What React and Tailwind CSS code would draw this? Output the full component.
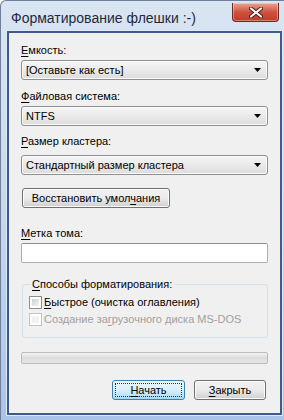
import React from 'react';

const U = ({ children }) => <span className="underline underline-offset-[2px]">{children}</span>;

const Select = ({ value }) => (
  <div className="mt-[2px] h-[20px] flex items-center justify-between rounded-[3px] border border-[#8e8f8f] bg-gradient-to-b from-[#f6f6f6] via-[#eaeaea] to-[#dcdcdc] pl-[4px] pr-[6px] shadow-[inset_0_0_0_1px_#fbfbfb]">
    <span className="leading-[15px] whitespace-nowrap">{value}</span>
    <svg width="7" height="4" viewBox="0 0 7 4">
      <path d="M0 0 H7 L3.5 4 Z" fill="#000" />
    </svg>
  </div>
);

const Checkbox = ({ disabled }) => (
  <span
    className={
      'shrink-0 w-[13px] h-[13px] p-[2px] border bg-white flex ' +
      (disabled ? 'border-[#c4c4c4]' : 'border-[#8e8f8f]')
    }
  >
    <span
      className={
        'flex-1 ' +
        (disabled
          ? 'bg-[#f2f2f2]'
          : 'bg-gradient-to-br from-[#cbcfd5] to-[#f6f6f6]')
      }
    />
  </span>
);

export default function App() {
  return (
    <div
      className="w-[284px] h-[420px] flex flex-col bg-gradient-to-b from-[#dae5f3] via-[#c7d8ee] to-[#a9c4e8] border-t border-l border-[#6d7f99] rounded-tl-[6px] text-[11px] text-black"
      style={{ fontFamily: '"Liberation Sans", Arial, sans-serif' }}
    >
      {/* Title bar */}
      <div className="h-[30px] flex items-start justify-between">
        <span className="mt-[7px] ml-[10px] text-[14px] leading-[20px] text-[#1e2a3a] whitespace-nowrap">
          Форматирование флешки :-)
        </span>
        <div className="mt-[2px] mr-[5px] w-[47px] h-[19px] rounded-b-[4px] border border-t-0 border-[#6b2a22] bg-gradient-to-b from-[#e8a496] via-[#d0513f] to-[#c23b2a] shadow-[inset_0_0_0_1px_rgba(255,255,255,0.35)] flex items-center justify-center">
          <svg width="14" height="11" viewBox="0 0 14 11">
            <path d="M2 1.5 L12 9.5 M12 1.5 L2 9.5" stroke="#4a1a14" strokeWidth="4" strokeLinecap="round" />
            <path d="M2 1.5 L12 9.5 M12 1.5 L2 9.5" stroke="#ffffff" strokeWidth="2.2" strokeLinecap="round" />
          </svg>
        </div>
      </div>

      {/* Client area */}
      <div className="ml-[6px] mr-[2px] mb-[5px] flex-1 border-2 border-[#3f5b8c] shadow-[0_0_0_1px_#dfe9f6]">
        <div className="h-full bg-[#f0f0f0] pl-[12px] pr-[12px] pt-[10px] flex flex-col">
          <div className="h-[15px] leading-[15px]">
            <U>Е</U>мкость:
          </div>
          <Select value="[Оставьте как есть]" />

          <div className="mt-[9px] h-[15px] leading-[15px]">
            <U>Ф</U>айловая система:
          </div>
          <Select value="NTFS" />

          <div className="mt-[8px] h-[15px] leading-[15px]">
            <U>Р</U>азмер кластера:
          </div>
          <div className="mt-[4px]">
            <Select value="Стандартный размер кластера" />
          </div>

          <div className="mt-[13px]">
            <button className="h-[20px] w-[148px] ml-[1px] rounded-[3px] border border-[#707070] bg-gradient-to-b from-[#f2f2f2] via-[#ebebeb] to-[#cfcfcf] shadow-[inset_0_0_0_1px_#fcfcfc] leading-[15px] whitespace-nowrap">
              Восстановить умол<U>ч</U>ания
            </button>
          </div>

          <div className="mt-[18px] h-[15px] leading-[15px]">
            <U>М</U>етка тома:
          </div>
          <div className="mt-[2px] h-[20px] rounded-[2px] border border-[#abadb3] border-t-[#8a8d94] bg-white" />

          <fieldset className="mt-[14px] ml-[1px] h-[61px] rounded-[3px] border border-[#d5dfe5] px-[6px]">
            <legend className="ml-[1px] px-[2px] h-[15px] leading-[15px]">
              <U>С</U>пособы форматирования:
            </legend>
            <div className="mt-[2px] flex items-center gap-[2px] h-[17px]">
              <Checkbox />
              <span className="leading-[15px] whitespace-nowrap">
                <U>Б</U>ыстрое (очистка оглавления)
              </span>
            </div>
            <div className="flex items-center gap-[2px] h-[17px] text-[#a0a0a0]">
              <Checkbox disabled />
              <span className="leading-[15px] whitespace-nowrap">
                Создание за<U>г</U>рузочного диска MS-DOS
              </span>
            </div>
          </fieldset>

          <div className="mt-[14px] h-[12px] rounded-[2px] border border-[#bcbcbc] bg-gradient-to-b from-[#f3f3f3] via-[#dcdcdc] to-[#e6e6e6]" />

          <div className="mt-[16px] flex justify-end gap-[9px] pr-[2px]">
            <button className="h-[20px] w-[73px] rounded-[3px] border border-[#3c7fb1] bg-gradient-to-b from-[#eaf6fd] via-[#d9f0fc] to-[#a7d9f5] p-[2px] leading-[15px]">
              <span className="flex h-full items-center justify-center border border-dotted border-[#333]">
                <U>Н</U>ачать
              </span>
            </button>
            <button className="h-[20px] w-[72px] rounded-[3px] border border-[#707070] bg-gradient-to-b from-[#f2f2f2] via-[#ebebeb] to-[#cfcfcf] shadow-[inset_0_0_0_1px_#fcfcfc] leading-[15px]">
              <U>З</U>акрыть
            </button>
          </div>
        </div>
      </div>
    </div>
  );
}
